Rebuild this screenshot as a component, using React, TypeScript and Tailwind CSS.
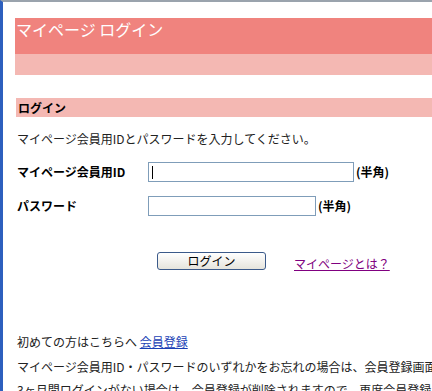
const font = { fontFamily: '"MS PGothic", "Noto Sans CJK JP", sans-serif' };

export default function App() {
  return (
    <div
      className="w-[432px] h-[391px] overflow-hidden bg-white border-l-[3px] border-t-2 border-l-[#2d5fbe] border-t-[#9aa3ad] text-[12px] text-[#222]"
      style={font}
    >
      <div className="pl-3 pt-4">
        {/* page title */}
        <div className="h-9 bg-[#f0837e] pl-[1px] pt-[1px] text-[16px] leading-[20px] text-white">
          マイページ ログイン
        </div>
        <div className="h-[21px] bg-[#f4b8b3]" />

        {/* section */}
        <div className="mt-[23px] ml-[1px] h-[19px] bg-[#f4b8b3] pl-[2px] font-bold leading-[19px] text-black">
          ログイン
        </div>
        <p className="ml-[2px] mt-[15px] leading-[14px]">
          マイページ会員用IDとパスワードを入力してください。
        </p>

        <div className="ml-[2px] mt-[16px] flex items-center">
          <span className="w-[131px] font-bold text-black">マイページ会員用ID</span>
          <div className="flex h-5 w-[206px] items-center border border-[#7f9db9] bg-white pl-[3px]">
            <div className="h-[13px] w-px bg-black" />
          </div>
          <span className="ml-[2px] font-bold text-black">(半角)</span>
        </div>
        <div className="ml-[2px] mt-[14px] flex items-center">
          <span className="w-[131px] font-bold text-black">パスワード</span>
          <div className="h-5 w-[168px] border border-[#7f9db9] bg-white" />
          <span className="ml-[2px] font-bold text-black">(半角)</span>
        </div>

        <div className="mt-[33px] flex items-center">
          <button className="ml-[142px] h-[18px] w-[109px] rounded-[3px] border border-[#3b5a8a] bg-gradient-to-b from-white to-[#e6e4dc] text-[12px] leading-[14px] text-black">
            ログイン
          </button>
          <a href="#" className="ml-[28px] mt-[6px] text-[#800080] underline">
            マイページとは？
          </a>
        </div>

        <p className="ml-[2px] mt-[62px] whitespace-nowrap leading-[14px]">
          初めての方はこちらへ{" "}
          <a href="#" className="text-[#1a3fb5] underline">
            会員登録
          </a>
        </p>
        <p className="ml-[2px] mt-[11px] whitespace-nowrap leading-[14px]">
          マイページ会員用ID・パスワードのいずれかをお忘れの場合は、会員登録画面から
        </p>
        <p className="ml-[2px] mt-[9px] whitespace-nowrap leading-[14px]">
          3ヶ月間ログインがない場合は、会員登録が削除されますので、再度会員登録を行ってください。
        </p>
      </div>
    </div>
  );
}
